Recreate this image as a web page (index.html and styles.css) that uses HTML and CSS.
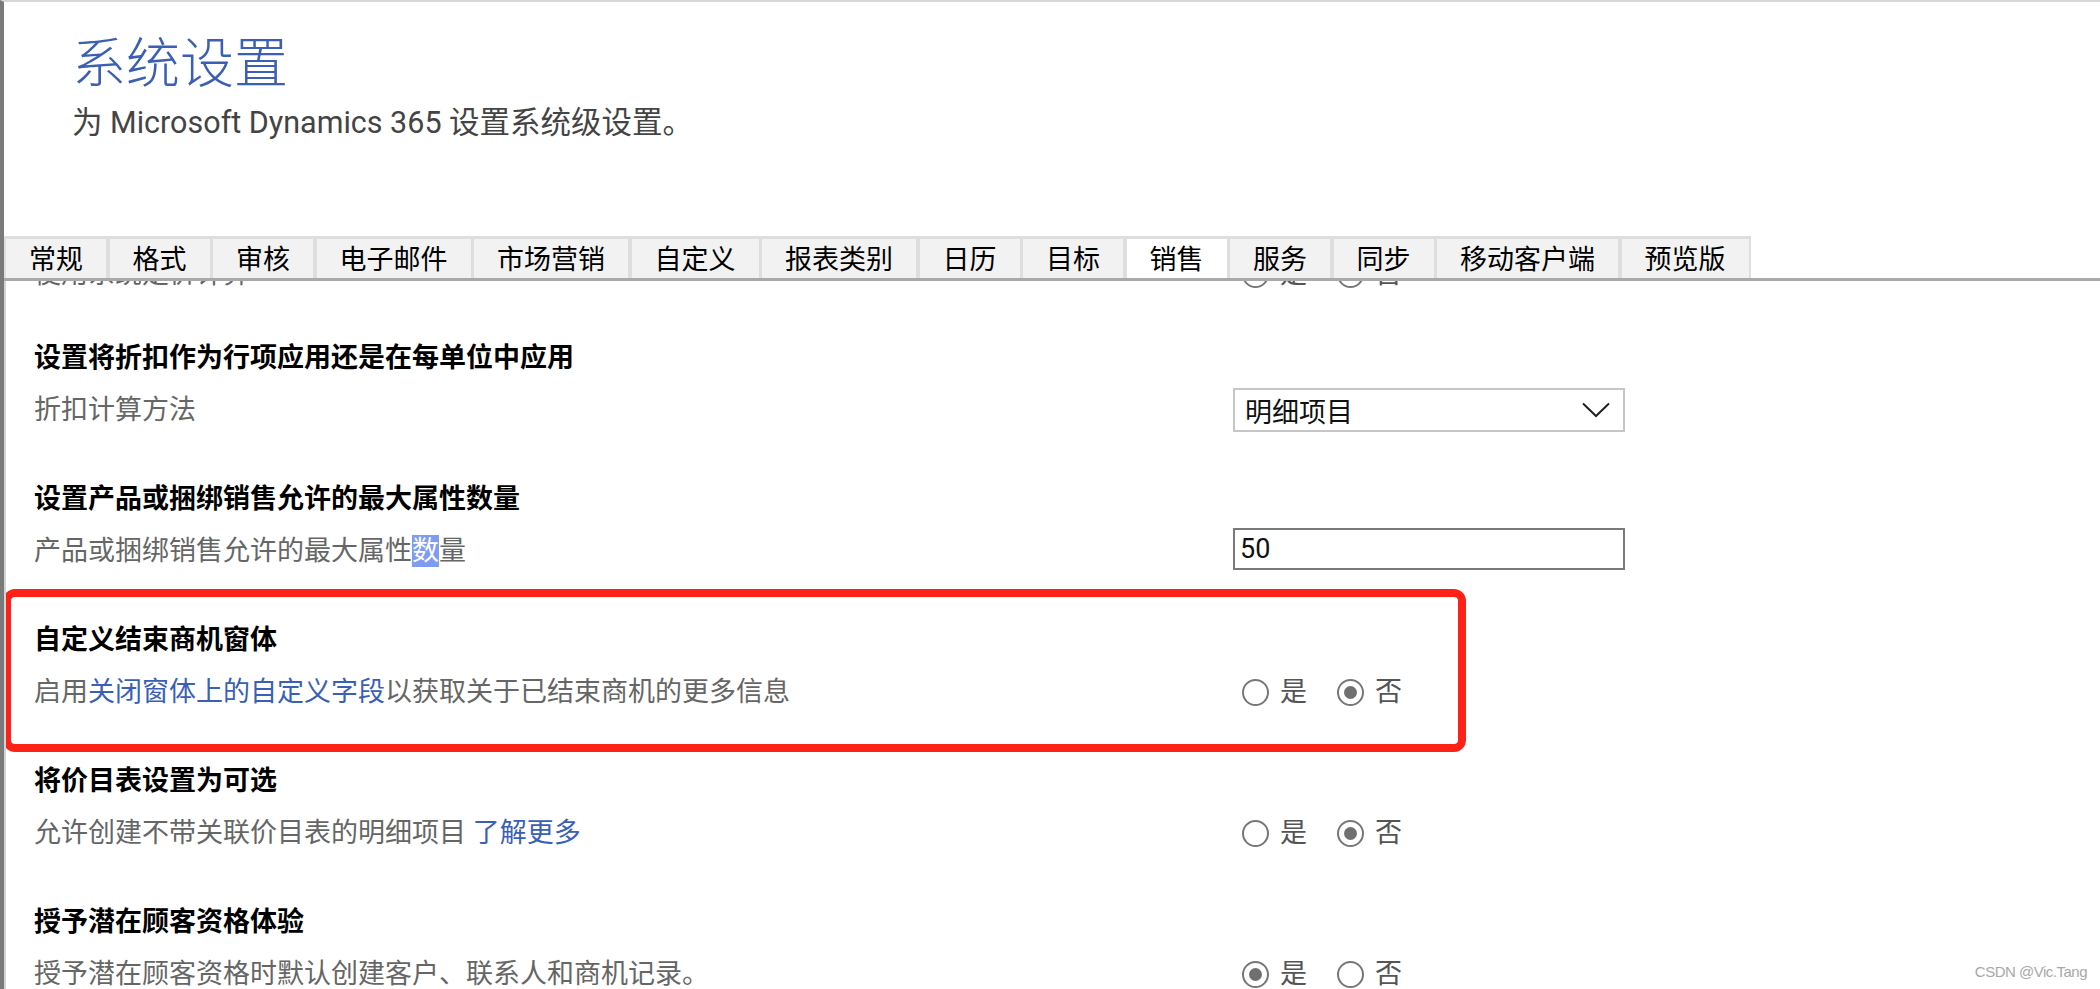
FILE: index.html
```html
<!DOCTYPE html>
<html lang="zh-CN">
<head>
    <meta charset="UTF-8">
    <title>系统设置</title>
    <link rel="stylesheet" href="styles.css">
</head>
<body>
    <div class="page">
        <div class="header">
            <h1>系统设置</h1>
            <p class="subtitle">为 Microsoft Dynamics 365 设置系统级设置。</p>
        </div>

        <div class="tabbar">
            <ul class="tab-list">
                <li class="tab">常规</li>
                <li class="tab">格式</li>
                <li class="tab">审核</li>
                <li class="tab">电子邮件</li>
                <li class="tab">市场营销</li>
                <li class="tab">自定义</li>
                <li class="tab">报表类别</li>
                <li class="tab">日历</li>
                <li class="tab">目标</li>
                <li class="tab active">销售</li>
                <li class="tab">服务</li>
                <li class="tab">同步</li>
                <li class="tab">移动客户端</li>
                <li class="tab">预览版</li>
            </ul>
        </div>

        <div class="content">
            <div class="settings-list">
                <div class="setting setting-scrolled">
                    <div class="setting-title">设置是否使用系统定价计算</div>
                    <div class="setting-row">
                        <div class="setting-label">使用系统定价计算</div>
                        <div class="radio-group">
                            <label class="radio"><input type="radio" name="pricing" checked> 是</label>
                            <label class="radio"><input type="radio" name="pricing"> 否</label>
                        </div>
                    </div>
                </div>

                <div class="setting">
                    <div class="setting-title">设置将折扣作为行项应用还是在每单位中应用</div>
                    <div class="setting-row">
                        <div class="setting-label">折扣计算方法</div>
                        <div class="select">
                            <span>明细项目</span>
                            <svg width="28" height="16" viewBox="0 0 28 16"><path d="M1 1.5 L14 14 L27 1.5" fill="none" stroke="#222" stroke-width="2"/></svg>
                        </div>
                    </div>
                </div>

                <div class="setting">
                    <div class="setting-title">设置产品或捆绑销售允许的最大属性数量</div>
                    <div class="setting-row">
                        <div class="setting-label">产品或捆绑销售允许的最大属性<span class="selected-text">数</span>量</div>
                        <input class="text-input" type="text" value="50">
                    </div>
                </div>

                <div class="setting">
                    <div class="annotation"></div>
                    <div class="setting-title">自定义结束商机窗体</div>
                    <div class="setting-row">
                        <div class="setting-label">启用<a href="#">关闭窗体上的自定义字段</a>以获取关于已结束商机的更多信息</div>
                        <div class="radio-group">
                            <label class="radio"><input type="radio" name="closeform"> 是</label>
                            <label class="radio"><input type="radio" name="closeform" checked> 否</label>
                        </div>
                    </div>
                </div>

                <div class="setting">
                    <div class="setting-title">将价目表设置为可选</div>
                    <div class="setting-row">
                        <div class="setting-label">允许创建不带关联价目表的明细项目 <a href="#">了解更多</a></div>
                        <div class="radio-group">
                            <label class="radio"><input type="radio" name="pricelist"> 是</label>
                            <label class="radio"><input type="radio" name="pricelist" checked> 否</label>
                        </div>
                    </div>
                </div>

                <div class="setting">
                    <div class="setting-title">授予潜在顾客资格体验</div>
                    <div class="setting-row">
                        <div class="setting-label">授予潜在顾客资格时默认创建客户、联系人和商机记录。</div>
                        <div class="radio-group">
                            <label class="radio"><input type="radio" name="qualify" checked> 是</label>
                            <label class="radio"><input type="radio" name="qualify"> 否</label>
                        </div>
                    </div>
                </div>
            </div>
        </div>

        <div class="watermark">CSDN @Vic.Tang</div>
    </div>
</body>
</html>
```

FILE: styles.css
```css
html, body {
    margin: 0;
    padding: 0;
    background: #fff;
}
body {
    font-family: Roboto, "Noto Sans CJK SC", sans-serif;
    color: #000;
}
.page {
    position: relative;
    height: 987px;
    border-top: 2px solid #d8d8d8;
    border-left: 4px solid #7a7a7a;
    display: flex;
    flex-direction: column;
    overflow: hidden;
}
.header {
    padding: 26px 0 95px 68px;
}
h1 {
    margin: 0;
    font-family: "Noto Sans CJK SC", sans-serif;
    font-size: 54px;
    font-weight: 300;
    line-height: 64px;
    color: #3a5fb5;
}
.subtitle {
    margin: 13px 0 0;
    font-size: 30.5px;
    line-height: 36px;
    color: #444;
}
.tabbar {
    border-bottom: 3px solid #a9a9a9;
}
.tab-list {
    display: inline-flex;
    gap: 3.5px;
    margin: 0;
    padding: 0 2px;
    list-style: none;
    background: #dedede;
    border-top: 3px solid #dedede;
}
.tab {
    padding: 3px 23px 0;
    height: 36px;
    line-height: 36px;
    font-size: 27px;
    background: #f2f2f2;
    color: #000;
}
.tab.active {
    background: #fff;
}
.content {
    flex: 1;
    overflow: hidden;
    border-left: 2px solid #d4d4d4;
}
.settings-list {
    margin-top: -77px;
}
.setting {
    position: relative;
    padding: 0 0 47px 28px;
}
.setting-scrolled {
    padding-bottom: 42px;
}
.setting-title {
    font-size: 27px;
    font-weight: 700;
    line-height: 36px;
    color: #000;
}
.setting-row {
    display: flex;
    align-items: center;
    height: 48px;
    margin-top: 10px;
}
.setting-label {
    flex: none;
    width: 1199px;
    font-size: 27px;
    line-height: 36px;
    color: #666;
}
.setting-label a {
    color: #3a5fb5;
    text-decoration: none;
}
.selected-text {
    background: #7f9cf5;
    color: #fff;
}
.select {
    box-sizing: border-box;
    width: 392px;
    height: 44px;
    border: 2px solid #c6c6c6;
    display: flex;
    align-items: center;
    justify-content: space-between;
    padding: 0 13px 0 10px;
    font-size: 27px;
    color: #111;
}
.text-input {
    box-sizing: border-box;
    width: 392px;
    height: 42px;
    margin-bottom: 5px;
    border: 2px solid #7a7a7a;
    padding: 0 5px;
    font-family: Roboto, "Noto Sans CJK SC", sans-serif;
    font-size: 27px;
    color: #111;
    outline: none;
}
.radio-group {
    display: flex;
    align-items: center;
    margin-left: 9px;
}
.radio {
    display: flex;
    align-items: center;
    gap: 11px;
    margin-right: 30px;
    font-size: 27px;
    line-height: 36px;
    color: #555;
}
.radio input {
    appearance: none;
    box-sizing: border-box;
    width: 27px;
    height: 27px;
    margin: 0;
    border: 2px solid #777;
    border-radius: 50%;
    display: flex;
    align-items: center;
    justify-content: center;
}
.radio input:checked::after {
    content: "";
    width: 13px;
    height: 13px;
    border-radius: 50%;
    background: #707070;
}
.annotation {
    position: absolute;
    top: -33px;
    left: -3px;
    width: 1463px;
    height: 163px;
    box-sizing: border-box;
    border: 8px solid #fe2117;
    border-radius: 12px;
    pointer-events: none;
}
.watermark {
    position: absolute;
    right: 13px;
    bottom: 9px;
    font-family: "Liberation Sans", sans-serif;
    font-size: 15px;
    color: #a8a8a8;
    letter-spacing: -0.5px;
}
```
